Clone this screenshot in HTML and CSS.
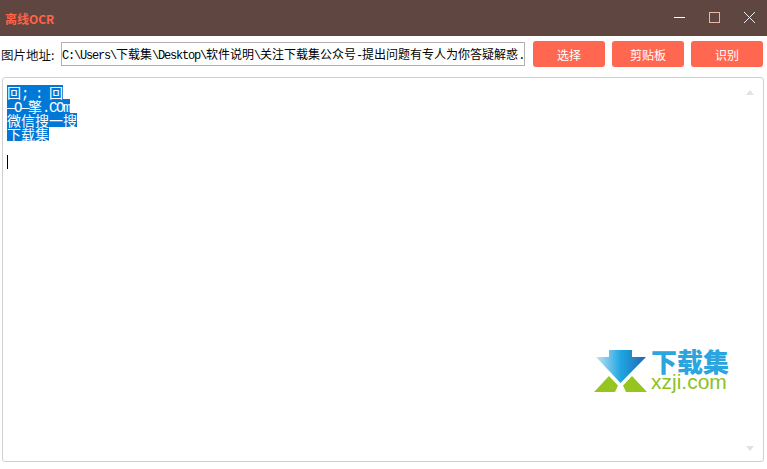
FILE: index.html
```html
<!DOCTYPE html>
<html lang="zh-CN">
<head>
<meta charset="utf-8">
<title>离线OCR</title>
<link rel="stylesheet" href="styles.css">
</head>
<body>
<header class="titlebar">
  <span class="app-title">离线OCR</span>
  <div class="win-controls">
    <svg class="win-icon" viewBox="0 0 12 12"><path d="M0 5.5H11" stroke="#fff" fill="none"/></svg>
    <svg class="win-icon" viewBox="0 0 12 12"><rect x="0.5" y="0.5" width="10" height="10" stroke="#e8b8a8" fill="none"/></svg>
    <svg class="win-icon" viewBox="0 0 12 12"><path d="M0 0L11 11M11 0L0 11" stroke="#eee" fill="none"/></svg>
  </div>
</header>
<section class="toolbar">
  <label class="path-label">图片地址:</label>
  <div class="path-input"><span class="latin">C:\Users\</span>下载集<span class="latin">\Desktop\</span>软件说明<span class="latin">\</span>关注下载集公众号<span class="latin">-</span>提出问题有专人为你答疑解惑<span class="latin">.</span></div>
  <div class="actions">
    <button class="btn">选择</button>
    <button class="btn">剪贴板</button>
    <button class="btn">识别</button>
  </div>
</section>
<main class="result">
  <div class="sel">回<span class="mono">; : </span>回</div>
  <div class="sel"><span class="mono">—O—</span>擎<span class="mono">.COm</span></div>
  <div class="sel">微信搜一搜</div>
  <div class="sel">下载集</div>
  <div class="blank"></div>
  <div class="caret"></div>
  <i class="scroll-up"></i>
  <i class="scroll-down"></i>
  <div class="logo">
    <svg class="logo-mark" viewBox="0 0 54 44">
      <defs>
        <linearGradient id="arrow" x1="0" x2="1" y1="0" y2="0">
          <stop offset="0" stop-color="#bfe3f5"/>
          <stop offset="0.5" stop-color="#1fa5e2"/>
          <stop offset="1" stop-color="#2465ae"/>
        </linearGradient>
      </defs>
      <path d="M15 0H38V7H52L26.500 33L2 7H15Z" fill="url(#arrow)"/>
      <path d="M0 42L15 26L24 35.500L21 42Z" fill="#97c51f"/>
      <path d="M53 42L38 26L29 35.500L32 42Z" fill="#97c51f"/>
    </svg>
    <div class="logo-text">
      <span class="logo-cn">下载集</span>
      <span class="logo-en">xzji.com</span>
    </div>
  </div>
</main>
</body>
</html>
```
FILE: styles.css
```css
* { box-sizing: border-box; }
html, body { height: 100%; }
body {
  margin: 0;
  background: #fff;
  color: #111;
  font-family: "Noto Sans CJK SC", "Liberation Sans", sans-serif;
  font-size: 12px;
  display: flex;
  flex-direction: column;
  overflow: hidden;
}
.titlebar {
  height: 36px;
  flex: none;
  background: #5f4641;
  display: flex;
  align-items: center;
  justify-content: space-between;
  padding: 0 11px 0 5px;
}
.app-title {
  color: #ff6347;
  font-weight: 700;
  font-size: 12px;
}
.win-controls { display: flex; gap: 23px; }
.win-icon { width: 12px; height: 12px; display: block; }
.toolbar {
  height: 41px;
  flex: none;
  display: flex;
  align-items: center;
  padding: 0 4px 5px 1px;
}
.path-label { width: 60px; flex: none; font-size: 12.500px; white-space: nowrap; }
.path-input {
  width: 464px;
  height: 24px;
  flex: none;
  border: 1px solid #b0b0b0;
  padding: 0;
  line-height: 22px;
  font-size: 12px;
  color: #000;
  white-space: nowrap;
  overflow: hidden;
}
.latin { font-family: "Liberation Mono", monospace; font-size: 12px; letter-spacing: -1.200px; }
.actions { display: flex; gap: 7px; margin-left: 8px; }
.btn {
  width: 72px;
  height: 26px;
  border: 0;
  border-radius: 3px;
  background: #ff6750;
  color: #fff;
  font: inherit;
  font-size: 12px;
  padding: 0;
}
.result {
  position: relative;
  flex: 1;
  margin: 0 3px 7px 2px;
  padding: 7px 4px;
  border: 1px solid #d0d0d0;
  border-radius: 3px;
  font-size: 14px;
  line-height: 14px;
}
.sel {
  width: fit-content;
  height: 14px;
  background: #0078d7;
  color: #fff;
  white-space: nowrap;
}
.mono { font-family: "Liberation Mono", monospace; font-size: 14px; letter-spacing: -1.400px; }
.blank { height: 14px; }
.caret { width: 1px; height: 14px; background: #000; }
.scroll-up, .scroll-down {
  position: absolute;
  right: 9px;
  width: 0;
  height: 0;
  border-left: 4px solid transparent;
  border-right: 4px solid transparent;
}
.scroll-up { top: 12px; border-bottom: 5px solid #e2e2e2; }
.scroll-down { bottom: 10px; border-top: 5px solid #e2e2e2; }
.logo {
  position: absolute;
  left: 591px;
  top: 272px;
  display: flex;
  gap: 3px;
}
.logo-mark { width: 54px; height: 44px; display: block; }
.logo-text { display: flex; flex-direction: column; width: 80px; }
.logo-cn {
  color: #2aa5e0;
  font-size: 26px;
  font-weight: 900;
  line-height: 22px;
  white-space: nowrap;
}
.logo-en {
  color: #8cc21f;
  font-family: "Liberation Sans", sans-serif;
  font-size: 21px;
  line-height: 19px;
}
```
